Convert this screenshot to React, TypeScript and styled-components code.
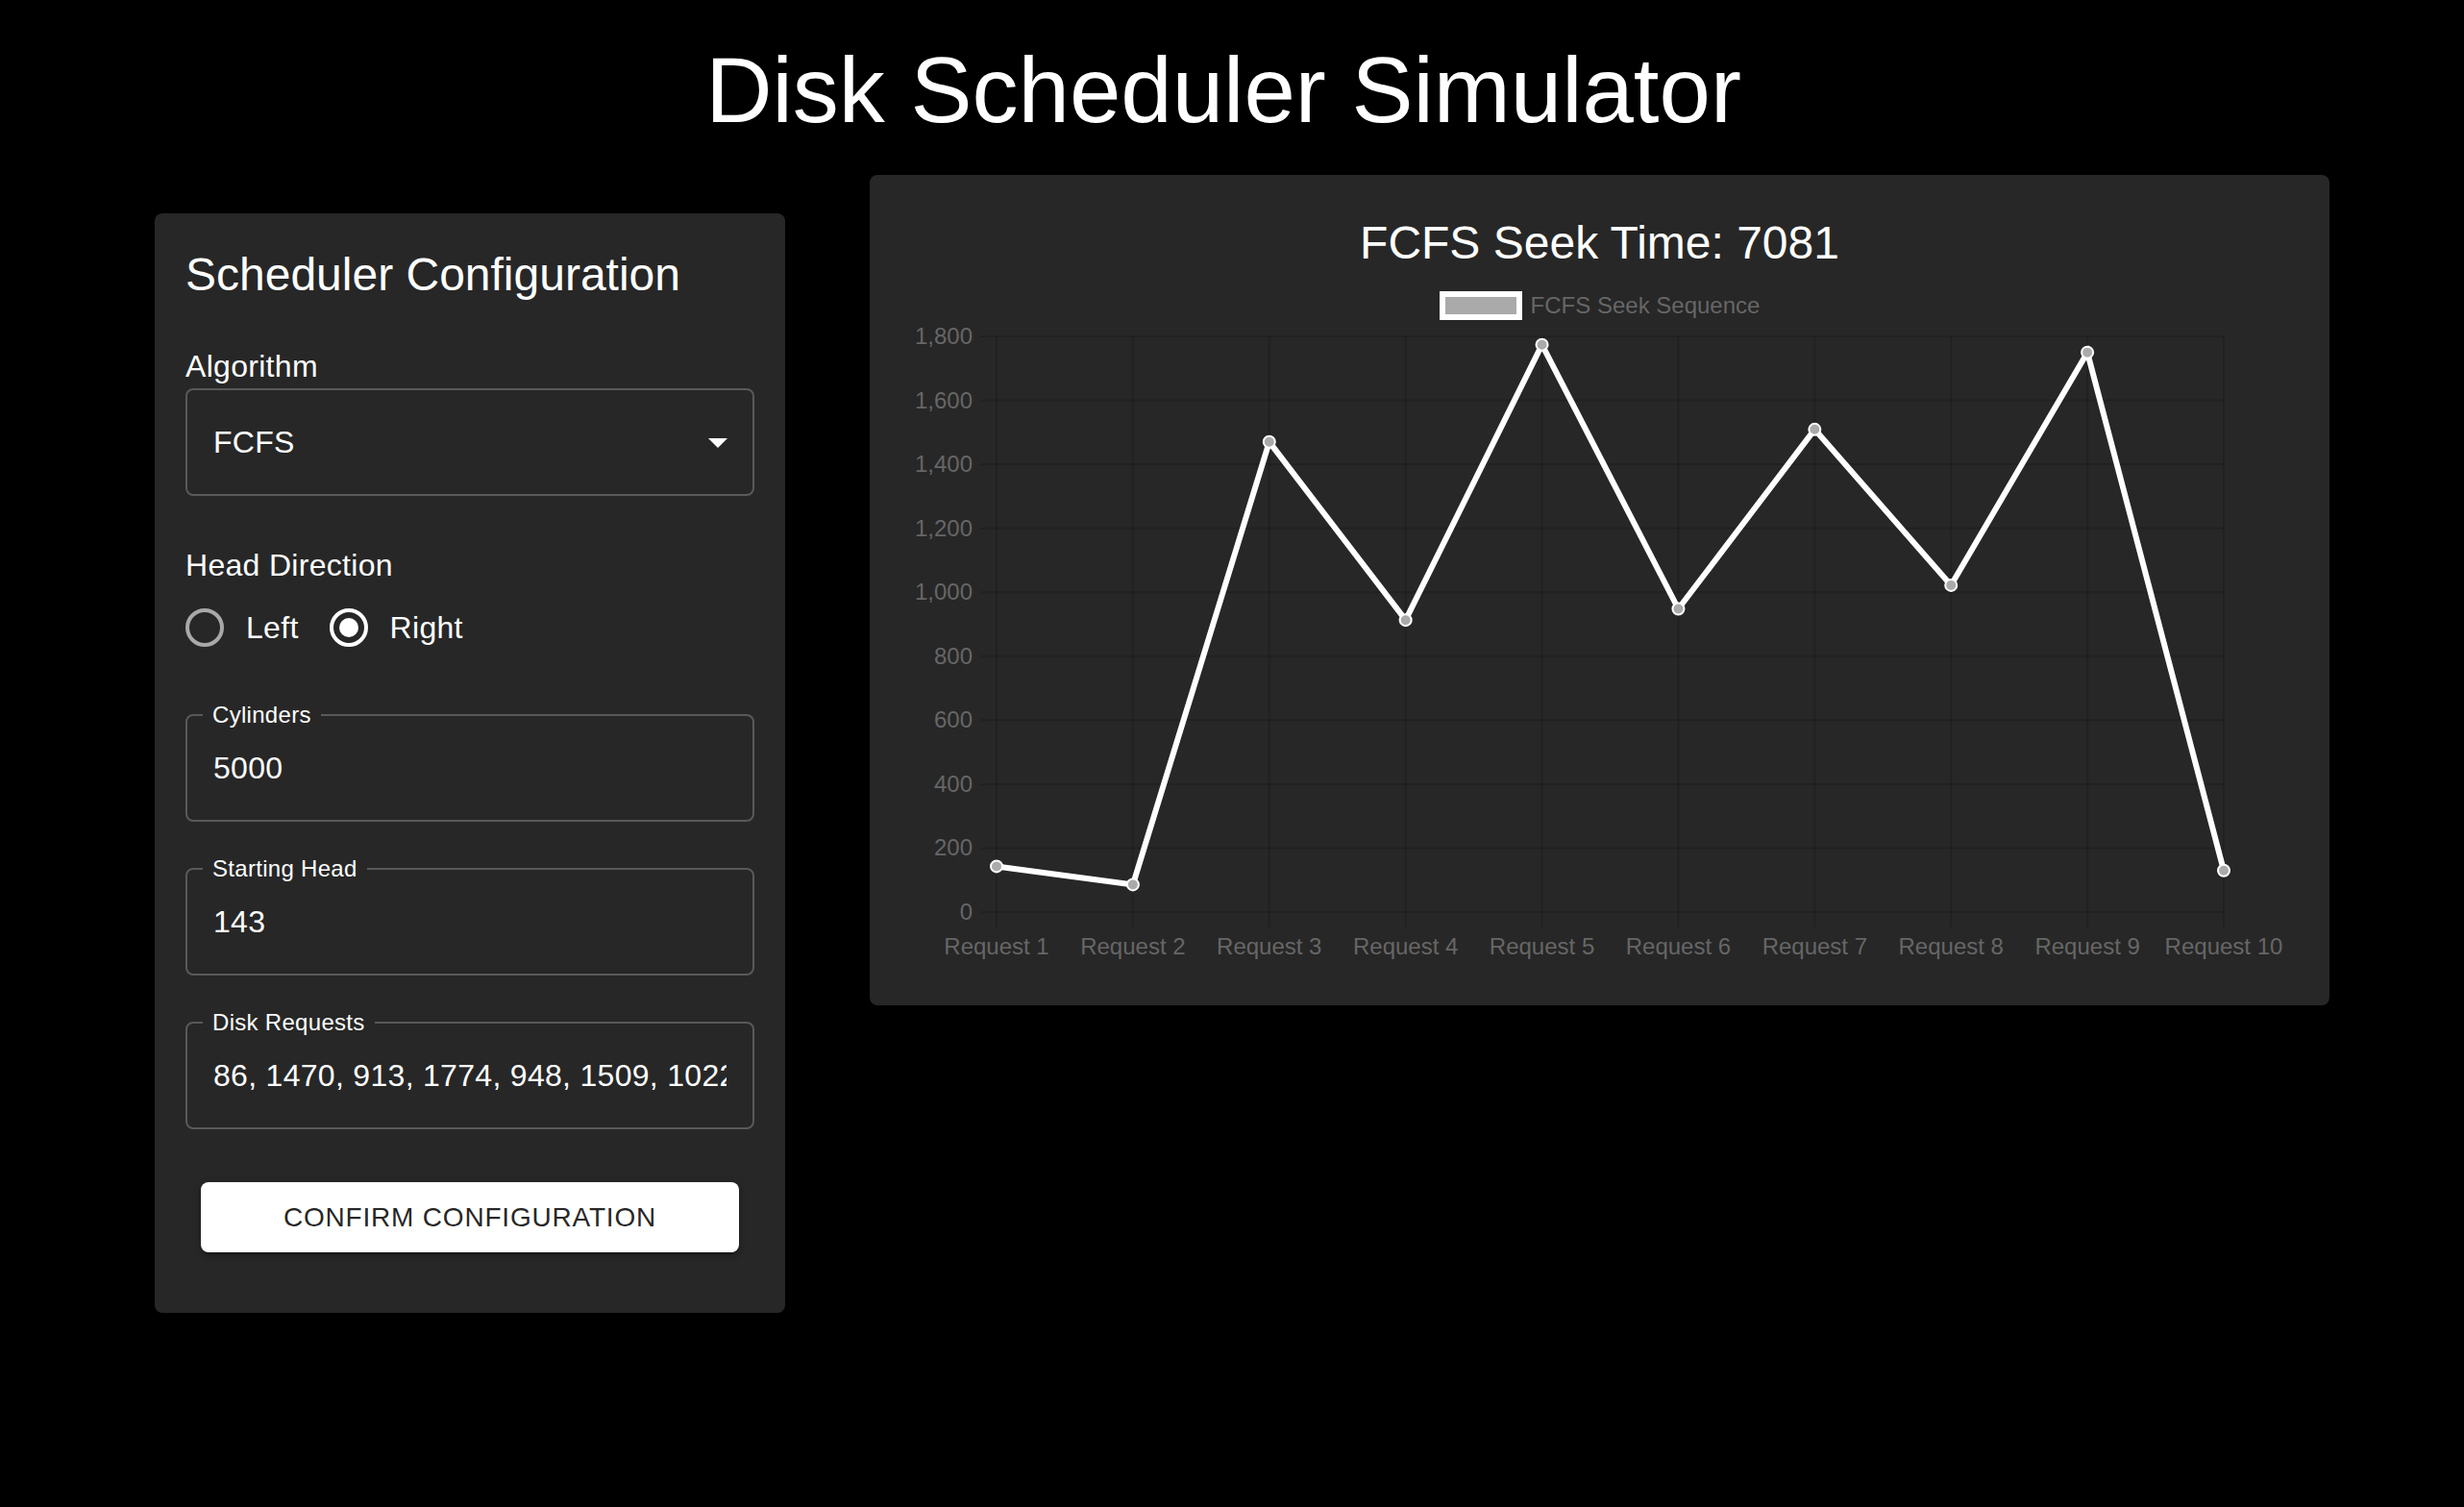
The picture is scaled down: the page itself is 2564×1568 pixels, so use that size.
import React from 'react';
import styled, { createGlobalStyle } from 'styled-components';

const GlobalStyle = createGlobalStyle`
  html, body { margin: 0; padding: 0; background: #000; }
  body {
    font-family: "Liberation Sans", Arial, Helvetica, sans-serif;
    color: #fff;
  }
  *, *::before, *::after { box-sizing: border-box; }
`;

const Page = styled.div`
  width: 2564px;
  min-height: 1568px;
  background: #000;
`;

const Title = styled.h1`
  margin: 0;
  padding: 38px 18px 0 0;
  font-size: 96px;
  line-height: 112px;
  font-weight: 400;
  text-align: center;
  color: #fff;
`;

const Main = styled.main`
  display: flex;
  align-items: flex-start;
  padding-left: 161px;
  margin-top: 32px;
`;

const Paper = styled.section`
  background: #272727;
  border-radius: 8px;
`;

const ConfigPanel = styled(Paper)`
  width: 656px;
  margin-top: 40px;
  padding: 32px;
  display: flex;
  flex-direction: column;
`;

const PanelHeading = styled.h2`
  margin: 0;
  font-size: 48px;
  line-height: 64px;
  font-weight: 400;
  color: #fff;
`;

const FieldLabel = styled.div<{ $gap: number }>`
  margin-top: ${(p) => p.$gap}px;
  font-size: 32px;
  line-height: 46px;
  letter-spacing: 0.3px;
  color: #fff;
`;

const SelectBox = styled.div`
  display: flex;
  align-items: center;
  justify-content: space-between;
  height: 112px;
  border: 2px solid rgba(255, 255, 255, 0.23);
  border-radius: 8px;
  padding: 0 12px 0 27px;
  font-size: 32px;
  letter-spacing: 0.3px;
  color: #fff;
`;

const RadioRow = styled.div`
  display: flex;
  align-items: center;
  gap: 32px;
  height: 84px;
`;

const RadioOption = styled.label`
  display: flex;
  align-items: center;
  gap: 23px;
  font-size: 32px;
  letter-spacing: 0.3px;
  color: #fff;
`;

const RadioMark = styled.span<{ $checked?: boolean }>`
  width: 40px;
  height: 40px;
  border-radius: 50%;
  border: 4px solid ${(p) => (p.$checked ? '#fff' : 'rgba(255,255,255,0.6)')};
  display: grid;
  place-items: center;
  &::after {
    content: '';
    width: 20px;
    height: 20px;
    border-radius: 50%;
    background: #fff;
    display: ${(p) => (p.$checked ? 'block' : 'none')};
  }
`;

const OutlinedField = styled.div`
  position: relative;
  height: 112px;
  margin-top: 48px;
`;

const Outline = styled.fieldset`
  position: absolute;
  top: -11px;
  left: 0;
  right: 0;
  bottom: 0;
  margin: 0;
  padding: 0 16px;
  min-width: 0;
  border: 2px solid rgba(255, 255, 255, 0.23);
  border-radius: 8px;
  pointer-events: none;
`;

const OutlineLabel = styled.legend`
  padding: 0 10px;
  font-size: 24px;
  line-height: 24px;
  letter-spacing: 0.3px;
  color: #fff;
`;

const TextInput = styled.input`
  display: block;
  width: 100%;
  height: 100%;
  margin: 0;
  padding: 0 29px;
  background: transparent;
  border: none;
  outline: none;
  font-family: inherit;
  font-size: 32px;
  letter-spacing: 0.3px;
  color: #fff;
`;

const ConfirmButton = styled.button`
  margin: 55px 16px 31px;
  height: 73px;
  background: #fff;
  color: rgba(0, 0, 0, 0.87);
  border: none;
  border-radius: 8px;
  font-family: inherit;
  font-size: 28px;
  font-weight: 500;
  letter-spacing: 0.8px;
  text-transform: uppercase;
  cursor: pointer;
  box-shadow: 0 6px 2px -4px rgba(0, 0, 0, 0.2), 0 4px 4px 0 rgba(0, 0, 0, 0.14),
    0 2px 10px 0 rgba(0, 0, 0, 0.12);
`;

const ChartPanel = styled(Paper)`
  width: 1519px;
  height: 864px;
  margin-left: 88px;
  padding-top: 43px;
  display: flex;
  flex-direction: column;
  align-items: center;
`;

const ChartTitle = styled.h2`
  margin: 0;
  font-size: 48px;
  line-height: 56px;
  font-weight: 400;
  color: #fff;
`;

const Legend = styled.div`
  margin-top: 22px;
  height: 30px;
  display: flex;
  align-items: center;
  gap: 9px;
  font-size: 24px;
  color: #666;
`;

const LegendSwatch = styled.span`
  width: 86px;
  height: 30px;
  border: 6px solid #fff;
  background: #aaa;
`;

const Plot = styled.svg`
  display: block;
  margin-top: 7px;
  overflow: visible;
  font-family: "Liberation Sans", Arial, Helvetica, sans-serif;
`;

const data = [143, 86, 1470, 913, 1774, 948, 1509, 1022, 1750, 130];
const requests = ['86', '1470', '913', '1774', '948', '1509', '1022', '1750', '130'];

const W = 1519;
const H = 706;
const L = 132;
const R = 1409;
const T = 10;
const B = 609;
const Y_MAX = 1800;
const yTicks = [0, 200, 400, 600, 800, 1000, 1200, 1400, 1600, 1800];

const xAt = (i: number) => L + (i * (R - L)) / (data.length - 1);
const yAt = (v: number) => B - (v / Y_MAX) * (B - T);

const ArrowDropDown = () => (
  <svg width="48" height="48" viewBox="0 0 24 24" aria-hidden="true">
    <path d="M7 10l5 5 5-5z" fill="#fff" />
  </svg>
);

const SeekChart = () => {
  const gridColor = 'rgba(0,0,0,0.14)';
  const points = data.map((v, i) => `${xAt(i)},${yAt(v)}`).join(' ');
  return (
    <Plot width={W} height={H} viewBox={`0 0 ${W} ${H}`}>
      {yTicks.map((t) => (
        <line key={`h${t}`} x1={115} x2={R} y1={yAt(t)} y2={yAt(t)} stroke={gridColor} strokeWidth={2} />
      ))}
      {data.map((_, i) => (
        <line key={`v${i}`} x1={xAt(i)} x2={xAt(i)} y1={T} y2={B + 16} stroke={gridColor} strokeWidth={2} />
      ))}
      {yTicks.map((t) => (
        <text key={`yl${t}`} x={107} y={yAt(t) + 8} fill="#666" fontSize={24} textAnchor="end">
          {t.toLocaleString('en-US')}
        </text>
      ))}
      {data.map((_, i) => (
        <text key={`xl${i}`} x={xAt(i)} y={653} fill="#666" fontSize={24} textAnchor="middle">
          {`Request ${i + 1}`}
        </text>
      ))}
      <polyline points={points} fill="none" stroke="#fff" strokeWidth={6} strokeLinejoin="miter" />
      {data.map((v, i) => (
        <circle key={`p${i}`} cx={xAt(i)} cy={yAt(v)} r={6} fill="#aaa" stroke="#fff" strokeWidth={2} />
      ))}
    </Plot>
  );
};

export default function App() {
  return (
    <Page>
      <GlobalStyle />
      <Title>Disk Scheduler Simulator</Title>
      <Main>
        <ConfigPanel>
          <PanelHeading>Scheduler Configuration</PanelHeading>
          <FieldLabel $gap={40}>Algorithm</FieldLabel>
          <SelectBox>
            <span>FCFS</span>
            <ArrowDropDown />
          </SelectBox>
          <FieldLabel $gap={49}>Head Direction</FieldLabel>
          <RadioRow>
            <RadioOption>
              <RadioMark />
              Left
            </RadioOption>
            <RadioOption>
              <RadioMark $checked />
              Right
            </RadioOption>
          </RadioRow>
          <OutlinedField>
            <TextInput readOnly defaultValue="5000" />
            <Outline>
              <OutlineLabel>Cylinders</OutlineLabel>
            </Outline>
          </OutlinedField>
          <OutlinedField>
            <TextInput readOnly defaultValue="143" />
            <Outline>
              <OutlineLabel>Starting Head</OutlineLabel>
            </Outline>
          </OutlinedField>
          <OutlinedField>
            <TextInput readOnly defaultValue={requests.join(', ')} />
            <Outline>
              <OutlineLabel>Disk Requests</OutlineLabel>
            </Outline>
          </OutlinedField>
          <ConfirmButton type="button">Confirm Configuration</ConfirmButton>
        </ConfigPanel>
        <ChartPanel>
          <ChartTitle>FCFS Seek Time: 7081</ChartTitle>
          <Legend>
            <LegendSwatch />
            <span>FCFS Seek Sequence</span>
          </Legend>
          <SeekChart />
        </ChartPanel>
      </Main>
    </Page>
  );
}
